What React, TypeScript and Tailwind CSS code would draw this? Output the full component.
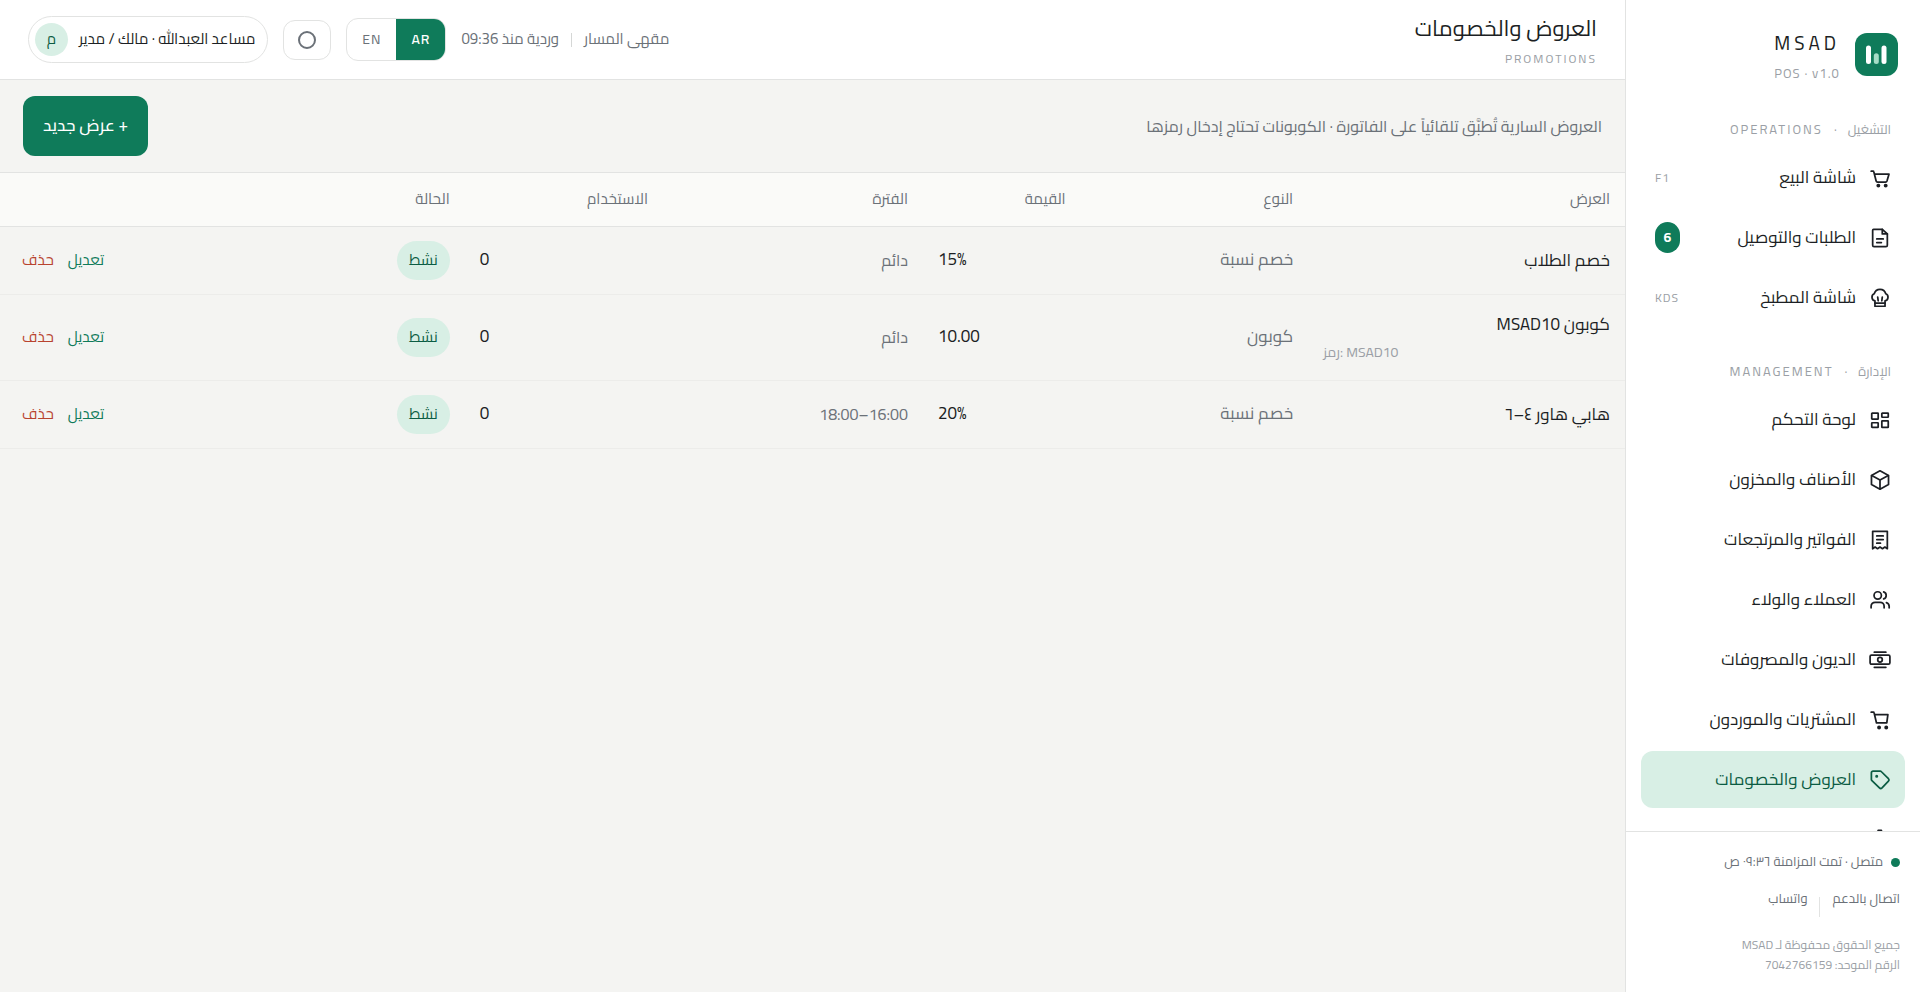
import type { ReactNode } from 'react'

interface NavItem {
  label: string
  icon: ReactNode
  hint?: string
  badge?: number
  active?: boolean
}

interface Promotion {
  name: string
  code?: string
  type: string
  value: string
  period: string
  used: number
}

function Icon({ children }: { children: ReactNode }) {
  return (
    <svg
      viewBox="0 0 24 24"
      className="size-[22px] shrink-0"
      fill="none"
      stroke="currentColor"
      strokeWidth="1.9"
      strokeLinecap="round"
      strokeLinejoin="round"
      aria-hidden="true"
    >
      {children}
    </svg>
  )
}

const OPERATIONS: NavItem[] = [
  {
    label: 'شاشة البيع',
    hint: 'F1',
    icon: (
      <Icon>
        <path d="M2.4 4.6h1.9a1 1 0 0 1 1 .8l2.5 9.8a1.6 1.6 0 0 0 1.6 1.2h8.7a1.6 1.6 0 0 0 1.5-1.1l2.2-7.5H6" />
        <circle cx="10.2" cy="20.3" r="1.2" fill="currentColor" />
        <circle cx="18.2" cy="20.3" r="1.2" fill="currentColor" />
      </Icon>
    ),
  },
  {
    label: 'الطلبات والتوصيل',
    badge: 6,
    icon: (
      <Icon>
        <path d="M5 2.5h9.5L20 7.500v12.500a1.5 1.5 0 0 1-1.5 1.5h-13A1.5 1.5 0 0 1 4 20V3.500a1 1 0 0 1 1-1z" />
        <path d="M14.5 2.5v5H20M8.5 13h7M8.5 17h5" />
      </Icon>
    ),
  },
  {
    label: 'شاشة المطبخ',
    hint: 'KDS',
    icon: (
      <Icon>
        <path d="M6.500 15a4 4 0 0 1-.8-7.6 6.500 6.500 0 0 1 12.6 0 4 4 0 0 1-.8 7.6v6h-11z" />
        <path d="M6.5 17.5h11M9.5 11l.5 4M14.5 11l-.5 4" />
      </Icon>
    ),
  },
]

const MANAGEMENT: NavItem[] = [
  {
    label: 'لوحة التحكم',
    icon: (
      <Icon>
        <rect x="3" y="4.5" width="7" height="6.5" rx=".5" />
        <rect x="14" y="4.5" width="7" height="4.5" rx=".5" />
        <rect x="3" y="15" width="7" height="5" rx=".5" />
        <rect x="14" y="13" width="7" height="7" rx=".5" />
      </Icon>
    ),
  },
  {
    label: 'الأصناف والمخزون',
    icon: (
      <Icon>
        <path d="M12 2l9.3 5v10L12 22l-9.3-5V7z" />
        <path d="M3 7.200L12 12l9-4.800M12 12v9.5" />
      </Icon>
    ),
  },
  {
    label: 'الفواتير والمرتجعات',
    icon: (
      <Icon>
        <path d="M4 2.5h16v19l-2.7-1.8-2.6 1.8-2.7-1.8-2.700 1.8-2.600-1.8L4 21.500z" />
        <path d="M8.5 7.5h7M8.5 11.5h7M8.5 15.5h4" />
      </Icon>
    ),
  },
  {
    label: 'العملاء والولاء',
    icon: (
      <Icon>
        <circle cx="9.5" cy="7" r="4" />
        <path d="M2.3 20.5v-1.7a4.3 4.3 0 0 1 4.3-4.3h5.6a4.3 4.3 0 0 1 4.3 4.3v1.7M16 3.2a4 4 0 0 1 0 7.6M22 20.5v-1.7a4.3 4.3 0 0 0-3-4" />
      </Icon>
    ),
  },
  {
    label: 'الديون والمصروفات',
    icon: (
      <Icon>
        <rect x="1.2" y="6.8" width="21.6" height="9.8" rx="1.5" />
        <circle cx="12" cy="11.7" r="2.5" />
        <path d="M5.8 3.5h12.6M5.8 20h12.6" />
      </Icon>
    ),
  },
  {
    label: 'المشتريات والموردون',
    icon: (
      <Icon>
        <path d="M2.4 3.5h2.2a1 1 0 0 1 1 .8l2.6 10.9h11.2l1.2-9H6.2" />
        <circle cx="11" cy="20.2" r="1.2" fill="currentColor" />
        <circle cx="18.8" cy="20.2" r="1.2" fill="currentColor" />
      </Icon>
    ),
  },
  {
    label: 'العروض والخصومات',
    active: true,
    icon: (
      <Icon>
        <path d="M4.4 2.4h7.8a2 2 0 0 1 1.4.6l7.600 7.4a2 2 0 0 1 0 2.8l-7 7.4a2 2 0 0 1-2.8 0l-8.200-7.8a2 2 0 0 1-.6-1.4V4.200a1.8 1.8 0 0 1 1.8-1.8z" />
        <circle cx="8.4" cy="8" r=".7" fill="currentColor" />
      </Icon>
    ),
  },
]

const PROMOTIONS: Promotion[] = [
  { name: 'خصم الطلاب', type: 'خصم نسبة', value: '15%', period: 'دائم', used: 0 },
  { name: 'كوبون MSAD10', code: 'MSAD10', type: 'كوبون', value: '10.00', period: 'دائم', used: 0 },
  { name: 'هابي هاور ٤–٦', type: 'خصم نسبة', value: '20%', period: '16:00–18:00', used: 0 },
]

export default function App() {
  return (
    <div
      dir="rtl"
      lang="ar"
      className="flex h-screen overflow-hidden bg-[#f4f4f2] text-[#1c1f24] font-['Cairo',Roboto,'DejaVu_Sans',sans-serif]"
    >
      <Sidebar />
      <div className="flex min-w-0 flex-1 flex-col">
        <Header />
        <main className="flex-1 overflow-auto">
          <div className="flex items-center justify-between border-b border-[#e2e3e2] px-[23px] py-4">
            <p className="text-[16px] text-[#6b7178]">
              العروض السارية تُطبَّق تلقائياً على الفاتورة · الكوبونات تحتاج إدخال رمزها
            </p>
            <button type="button" className="h-[60px] rounded-xl bg-[#0f7b5a] px-5 text-[17px] font-medium text-white">
              + عرض جديد
            </button>
          </div>
          <PromotionsTable />
        </main>
      </div>
    </div>
  )
}

function Sidebar() {
  return (
    <aside className="flex w-[295px] shrink-0 flex-col border-l border-[#e2e3e2] bg-white">
      <div className="flex items-start gap-[15px] px-[22px] pt-[27px]">
        <Logo />
        <div dir="ltr">
          <div className="text-[19px] leading-8 tracking-[4px]">MSAD</div>
          <div className="text-[13px] leading-7 tracking-[1px] text-[#9b9fa6]">POS · v1.0</div>
        </div>
      </div>

      <nav className="min-h-0 flex-1 overflow-hidden px-[15px] pt-[30px]">
        <NavGroup title="التشغيل" latin="OPERATIONS" items={OPERATIONS} />
        <div className="h-[30px]" />
        <NavGroup title="الإدارة" latin="MANAGEMENT" items={MANAGEMENT} />
        <div className="flex h-[57px] items-center px-[14px]">
          <Icon>
            <circle cx="12" cy="12" r="3.5" />
            <path d="M10 1.5h3.5l.6 3 2.7 1.5 2.9-1 1.8 3.1-2.3 2v3.8l2.3 2-1.8 3.1-2.9-1-2.700 1.5-.6 3H10l-.6-3L6.700 18l-2.9 1L2 15.900l2.300-2v-3.8L2 8.100 3.800 5l2.9 1 2.700-1.500z" />
          </Icon>
        </div>
      </nav>

      <footer className="h-[161px] border-t border-[#e2e3e2] px-5 pt-[18px] text-[13px] text-[#6b7178]">
        <div className="flex h-6 items-center gap-2">
          <span className="size-[9px] rounded-full bg-[#0f7b5a]" />
          متصل · تمت المزامنة ٠٩:٣٦ ص
        </div>
        <div className="mt-[15px] flex h-7 gap-3">
          <a href="#support">اتصال بالدعم</a>
          <span className="h-5 w-px self-end bg-[#e2e3e2]" />
          <a href="#whatsapp">واتساب</a>
        </div>
        <div className="mt-[18px] text-[12px] leading-5 text-[#9b9fa6]">
          جميع الحقوق محفوظة لـ MSAD
          <br />
          الرقم الموحد: 7042766159
        </div>
      </footer>
    </aside>
  )
}

function Logo() {
  return (
    <svg viewBox="0 0 43 43" className="mt-[6px] size-[43px] shrink-0" aria-hidden="true">
      <rect width="43" height="43" rx="12" fill="#0f7b5a" />
      <rect x="11" y="12.5" width="5" height="18.5" rx="2.5" fill="#fff" />
      <rect x="18.8" y="20.3" width="5" height="10.7" rx="2.5" fill="#a5dcc6" />
      <rect x="26.5" y="12.5" width="5" height="18.5" rx="2.5" fill="#fff" />
    </svg>
  )
}

function NavGroup({ title, latin, items }: { title: string; latin: string; items: NavItem[] }) {
  return (
    <section>
      <h2 className="mb-2 flex gap-[11px] px-[14px] text-[13px] leading-6 text-[#9b9fa6]">
        <span>{title}</span>
        <span>·</span>
        <span dir="ltr" className="tracking-[2px]">
          {latin}
        </span>
      </h2>
      <ul>
        {items.map(item => (
          <li key={item.label} className="pb-[3px]">
            <button
              type="button"
              className={`flex h-[57px] w-full items-center gap-[13px] rounded-xl px-[14px] text-[17px] ${
                item.active ? 'bg-[#d8efe5] text-[#0b5c43]' : ''
              }`}
            >
              {item.icon}
              <span className="flex-1 text-right whitespace-nowrap">{item.label}</span>
              {item.hint && (
                <span dir="ltr" className="text-[12px] tracking-[1px] text-[#9b9fa6]">
                  {item.hint}
                </span>
              )}
              {item.badge && (
                <span className="flex h-[31px] w-[25px] items-center justify-center rounded-full bg-[#0f7b5a] text-[14px] font-bold text-white">
                  {item.badge}
                </span>
              )}
            </button>
          </li>
        ))}
      </ul>
    </section>
  )
}

function Header() {
  return (
    <header className="flex h-20 shrink-0 items-center justify-between border-b border-[#e2e3e2] bg-white px-7">
      <div className="pt-[6px]">
        <h1 className="text-[22px] leading-8">العروض والخصومات</h1>
        <div dir="ltr" className="text-right text-[12px] leading-[30px] tracking-[2px] text-[#9b9fa6]">
          PROMOTIONS
        </div>
      </div>

      <div className="flex items-center gap-[15px] text-[15px]">
        <div className="flex items-center gap-3 text-[#6b7178]">
          <span>مقهى المسار</span>
          <span className="h-[14px] w-px bg-[#d5d7d6]" />
          <span>وردية منذ 09:36</span>
        </div>
        <div className="flex h-[43px] overflow-hidden rounded-xl border border-[#e2e3e2] text-[14px]">
          <button type="button" className="w-[49px] bg-[#0f7b5a] font-semibold tracking-[1px] text-white">
            AR
          </button>
          <button type="button" className="w-[49px] tracking-[1px] text-[#6b7178]">
            EN
          </button>
        </div>
        <button
          type="button"
          aria-label="المظهر"
          className="flex h-10 w-12 items-center justify-center rounded-xl border border-[#e2e3e2]"
        >
          <span className="size-[18px] rounded-full border-2 border-[#6b7178]" />
        </button>
        <button
          type="button"
          className="flex h-[47px] items-center gap-[11px] rounded-full border border-[#e2e3e2] pr-3 pl-[6px]"
        >
          <span>مساعد العبدالله · مالك / مدير</span>
          <span className="flex size-[33px] items-center justify-center rounded-full bg-[#d8efe5] text-[#0b5c43]">م</span>
        </button>
      </div>
    </header>
  )
}

function PromotionsTable() {
  return (
    <table className="w-full table-fixed border-collapse text-[17px]">
      <colgroup>
        <col className="w-[19.5%]" />
        <col className="w-[14%]" />
        <col className="w-[9.7%]" />
        <col className="w-[16%]" />
        <col className="w-[12.2%]" />
        <col className="w-[12%]" />
        <col />
      </colgroup>
      <thead className="bg-[#fafaf8] text-[15px] text-[#6b7178]">
        <tr className="h-[53px] border-b border-[#e2e3e2]">
          {['العرض', 'النوع', 'القيمة', 'الفترة', 'الاستخدام', 'الحالة', ''].map(h => (
            <th key={h} className="px-[15px] text-right font-normal">
              {h}
            </th>
          ))}
        </tr>
      </thead>
      <tbody>
        {PROMOTIONS.map(p => (
          <PromotionRow key={p.name} promo={p} />
        ))}
      </tbody>
    </table>
  )
}

function PromotionRow({ promo }: { promo: Promotion }) {
  return (
    <tr className="h-[68px] border-b border-[#ececea]">
      <td className="px-[15px] py-[14px]">
        <div className="leading-[30px]">{promo.name}</div>
        {promo.code && (
          <div dir="ltr" className="text-left text-[14px] leading-[27px] text-[#9b9fa6]">
            رمز: {promo.code}
          </div>
        )}
      </td>
      <td className="px-[15px] text-[#6b7178]">{promo.type}</td>
      <td dir="ltr" className="px-[15px] text-left">
        {promo.value}
      </td>
      <td className="px-[15px] text-[16px] text-[#6b7178]">{promo.period}</td>
      <td dir="ltr" className="px-[15px] text-left">
        {promo.used}
      </td>
      <td className="px-[15px]">
        <span className="inline-flex h-[39px] items-center rounded-full bg-[#d8efe5] px-3 text-[15px] text-[#0b5c43]">
          نشط
        </span>
      </td>
      <td className="px-[15px] text-left text-[15px]">
        <button type="button" className="px-[7px] text-[#0f7b5a]">
          تعديل
        </button>
        <button type="button" className="px-[7px] text-[#b8432f]">
          حذف
        </button>
      </td>
    </tr>
  )
}
